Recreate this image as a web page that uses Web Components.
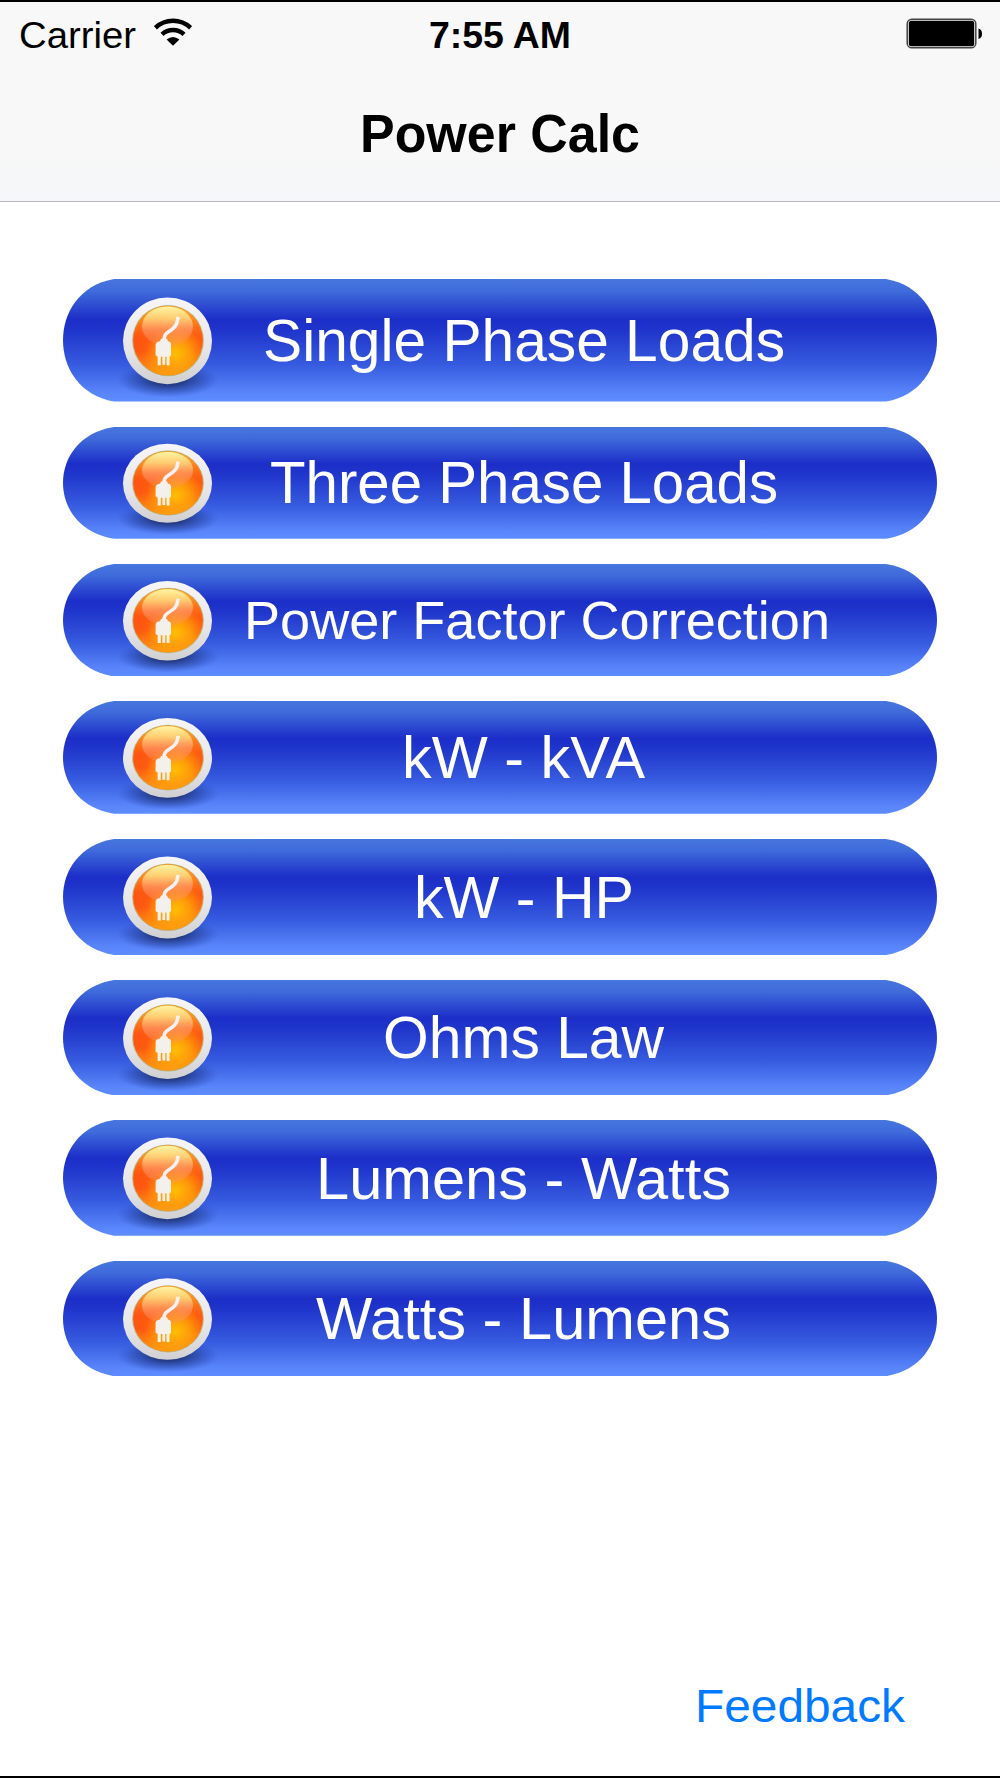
<!DOCTYPE html>
<html lang="en">
<head>
<meta charset="utf-8">
<title>Power Calc</title>
<style>
  body {
    margin: 0;
    background: #fff;
    font-family: "Liberation Sans", Arial, sans-serif;
  }
</style>
</head>
<body>
<calc-screen>
  <status-bar slot="top" carrier="Carrier" time="7:55 AM"></status-bar>
  <nav-bar slot="top">Power Calc</nav-bar>
  <pill-button style="--height:122.6px" width="522">Single Phase Loads</pill-button>
  <pill-button style="--height:111.7px" width="508">Three Phase Loads</pill-button>
  <pill-button style="--height:112.5px; --size:53px; --shift:13.5px" width="586">Power Factor Correction</pill-button>
  <pill-button style="--height:112.8px" width="243">kW - kVA</pill-button>
  <pill-button style="--height:115.9px" width="220">kW - HP</pill-button>
  <pill-button style="--height:115.3px" width="281">Ohms Law</pill-button>
  <pill-button style="--height:115.7px" width="415">Lumens - Watts</pill-button>
  <pill-button style="--height:115.2px" width="415">Watts - Lumens</pill-button>
  <text-link slot="bottom">Feedback</text-link>
</calc-screen>

<script>
// Sets a text on one line of a fixed width, so labels keep their measure.
const fitText = (text, width) => `
  <svg class='label' width='${width}' height='1' overflow='visible'>
    <text x='0' y='0' textLength='${width}' lengthAdjust='spacingAndGlyphs'>${text}</text>
  </svg>`

customElements.define('calc-screen', class extends HTMLElement {
  constructor() {
    super()
    const shadow = this.attachShadow({ mode: 'open' })
    shadow.innerHTML = `
    <header><slot name='top'></slot></header>
    <main><slot></slot></main>
    <footer><slot name='bottom'></slot></footer>
    <style>
      :host{
        display:flex;
        flex-direction:column;
        box-sizing:border-box;
        width:1000px;
        height:1778px;
        border-top:2px solid #000;
        border-bottom:2px solid #000;
        background:#fff;
        overflow:hidden;
      }
      header{
        box-sizing:border-box;
        height:200px;
        border-bottom:1px solid #b9babd;
        background:linear-gradient(#f8f8f8 72%, #f6f7f8 88%, #f5f6f9);
      }
      main{
        display:flex;
        flex-direction:column;
        gap:25px;
        padding:77.3px 63px 0;
        flex:1;
      }
      footer{
        display:flex;
        justify-content:flex-end;
        padding:0 95.5px 42px 0;
      }
    </style>`
  }
})

customElements.define('status-bar', class extends HTMLElement {
  constructor() {
    super()
    const shadow = this.attachShadow({ mode: 'open' })
    shadow.innerHTML = `
    <div class='left'>
      ${fitText(this.getAttribute('carrier'), 117)}
      <svg class='wifi' width='38' height='28' viewBox='0 0 38 28'>
        <g fill='none' stroke='#000' stroke-width='4.4'>
          <path d='M1.4 9.8A25.5 25.5 0 0 1 36.6 9.8'/>
          <path d='M8 16.4A16 16 0 0 1 30 16.4'/>
        </g>
        <path d='M12.6 21.4Q19 16.4 25.4 21.4L19 27.8Z'/>
      </svg>
    </div>
    <div class='time'>${fitText(this.getAttribute('time'), 142)}</div>
    <div class='right'>
      <svg width='76' height='32' viewBox='0 0 76 32'>
        <rect x='1.2' y='1.2' width='68.6' height='28.6' rx='4.6' fill='none' stroke='#444' stroke-width='1.5'/>
        <rect x='2.8' y='2.8' width='65.4' height='25.4' rx='2.5'/>
        <path d='M72.5 10.5Q76 11.5 76 15.8T72.5 21Z'/>
      </svg>
    </div>
    <style>
      :host{
        display:grid;
        grid-template-columns:1fr 142px 1fr;
        height:64px;
        align-items:center;
        font-size:37px;
      }
      .left{
        display:flex;
        align-items:center;
        gap:18px;
        padding-left:19px;
      }
      .label{
        margin-top:28px;
      }
      .time{
        display:flex;
        font-weight:bold;
        font-size:36px;
      }
      .wifi{
        margin-top:-4px;
      }
      .right{
        display:flex;
        justify-content:flex-end;
        padding-right:18px;
      }
    </style>`
  }
})

customElements.define('nav-bar', class extends HTMLElement {
  constructor() {
    super()
    const shadow = this.attachShadow({ mode: 'open' })
    shadow.innerHTML = `
    ${fitText(this.textContent, 280)}
    <style>
      :host{
        display:flex;
        justify-content:center;
        align-items:center;
        height:135px;
        font-size:53px;
        font-weight:bold;
      }
      .label{
        margin-top:38px;
      }
    </style>`
  }
})

customElements.define('plug-icon', class extends HTMLElement {
  constructor() {
    super()
    const shadow = this.attachShadow({ mode: 'open' })
    // Drawn for the tallest button; shorter buttons squash it with them.
    shadow.innerHTML = `
    <svg viewBox='0 0 110 123' preserveAspectRatio='none'>
      <defs>
        <linearGradient id='ring' x2='0' y2='1'>
          <stop offset='0' stop-color='#f6f6f8'/>
          <stop offset='.6' stop-color='#e6e6e8'/>
          <stop offset='1' stop-color='#d0d0d2'/>
        </linearGradient>
        <radialGradient id='glow' cx='.6' cy='.72' r='.62'>
          <stop offset='0' stop-color='#ffc400'/>
          <stop offset='.35' stop-color='#ff9a08'/>
          <stop offset='.7' stop-color='#ff5a10'/>
          <stop offset='1' stop-color='#ff5410'/>
        </radialGradient>
        <linearGradient id='low' x2='0' y2='1'>
          <stop offset='.65' stop-color='#ff9c10' stop-opacity='0'/>
          <stop offset='1' stop-color='#ff9c10'/>
        </linearGradient>
        <linearGradient id='top' x2='0' y2='1'>
          <stop offset='0' stop-color='#ffc430'/>
          <stop offset='.45' stop-color='#ff9020' stop-opacity='0'/>
        </linearGradient>
        <linearGradient id='gloss' x2='0' y2='1'>
          <stop offset='0' stop-color='#fff3a4'/>
          <stop offset='.3' stop-color='#ffdc84' stop-opacity='.8'/>
          <stop offset='.6' stop-color='#ff9c74' stop-opacity='.6'/>
          <stop offset='1' stop-color='#ff9060' stop-opacity='.3'/>
        </linearGradient>
        <radialGradient id='shade'>
          <stop offset='.3' stop-color='#1a2c68' stop-opacity='.8'/>
          <stop offset='.7' stop-color='#1f3a94' stop-opacity='.4'/>
          <stop offset='1' stop-color='#2848b8' stop-opacity='0'/>
        </radialGradient>
      </defs>
      <ellipse cx='55' cy='101' rx='51' ry='18' fill='url(#shade)'/>
      <ellipse cx='54.5' cy='62' rx='44.5' ry='43.5' fill='url(#ring)'/>
      <circle cx='55' cy='61.8' r='35.8' fill='#c3b071'/>
      <circle cx='55' cy='61.8' r='34.8' fill='url(#glow)'/>
      <circle cx='55' cy='61.8' r='34.8' fill='url(#low)'/>
      <circle cx='55' cy='61.8' r='34.8' fill='url(#top)'/>
      <ellipse cx='54.5' cy='47.5' rx='25.5' ry='20' fill='url(#gloss)'/>
      <path d='M51 63C50.5 55 54 54.5 59 50.5C64 46.5 64.5 43 65 38' fill='none' stroke='#f6f2f2' stroke-width='3.6'/>
      <path d='M48 60H54L55 62.5Q58 63 58 66V76.5L56.5 78V86.5H53.6V78H52.2V86H49.4V78H47.8V86.5H44.7V78L42.6 76.5V66Q43 63 47 62.5Z' fill='#f4f1ec'/>
    </svg>
    <style>
      :host{
        display:block;
      }
      svg{
        display:block;
        width:110px;
        height:100%;
      }
    </style>`
  }
})

customElements.define('pill-button', class extends HTMLElement {
  constructor() {
    super()
    const shadow = this.attachShadow({ mode: 'open' })
    shadow.innerHTML = `
    <svg class='pill' viewBox='0 0 874 122' preserveAspectRatio='none'>
      <defs>
        <linearGradient id='fill' x2='0' y2='1'>
          <stop offset='0' stop-color='#4676de'/>
          <stop offset='.1' stop-color='#3f6bdb'/>
          <stop offset='.33' stop-color='#1c2ec8'/>
          <stop offset='.42' stop-color='#1f35cb'/>
          <stop offset='.7' stop-color='#365bdf'/>
          <stop offset='.93' stop-color='#5985fb'/>
          <stop offset='1' stop-color='#5d8dff'/>
        </linearGradient>
      </defs>
      <path fill='url(#fill)' d='M51 0H823C858 6 874 34 874 61S858 116 823 122H51C16 116 0 88 0 61S16 6 51 0Z'/>
    </svg>
    <div class='content'>
      <plug-icon></plug-icon>
      <div class='text'>${fitText(this.textContent, this.getAttribute('width'))}</div>
    </div>
    <style>
      :host{
        display:grid;
        height:var(--height);
        color:#fff;
        font-size:var(--size, 58.5px);
      }
      .pill, .content{
        grid-area:1 / 1;
        width:100%;
        height:var(--height);
      }
      .content{
        display:grid;
        grid-template-columns:50px 110px 1fr;
      }
      plug-icon{
        grid-column:2;
        grid-row:1;
        height:var(--height);
      }
      .text{
        grid-column:1 / -1;
        grid-row:1;
        display:flex;
        align-items:center;
        justify-content:center;
        padding-left:calc(47px + 2 * var(--shift, 0px));
      }
      .label{
        margin-top:calc(var(--size, 58.5px) * .7 + 1.5px);
        fill:currentColor;
      }
    </style>`
  }
})

customElements.define('text-link', class extends HTMLElement {
  constructor() {
    super()
    const shadow = this.attachShadow({ mode: 'open' })
    shadow.innerHTML = `
    ${fitText(this.textContent, 210)}
    <style>
      :host{
        display:flex;
        align-items:flex-end;
        height:60px;
        color:#007aff;
        font-size:47px;
      }
      .label{
        margin-bottom:11px;
        fill:currentColor;
      }
    </style>`
  }
})
</script>
</body>
</html>
